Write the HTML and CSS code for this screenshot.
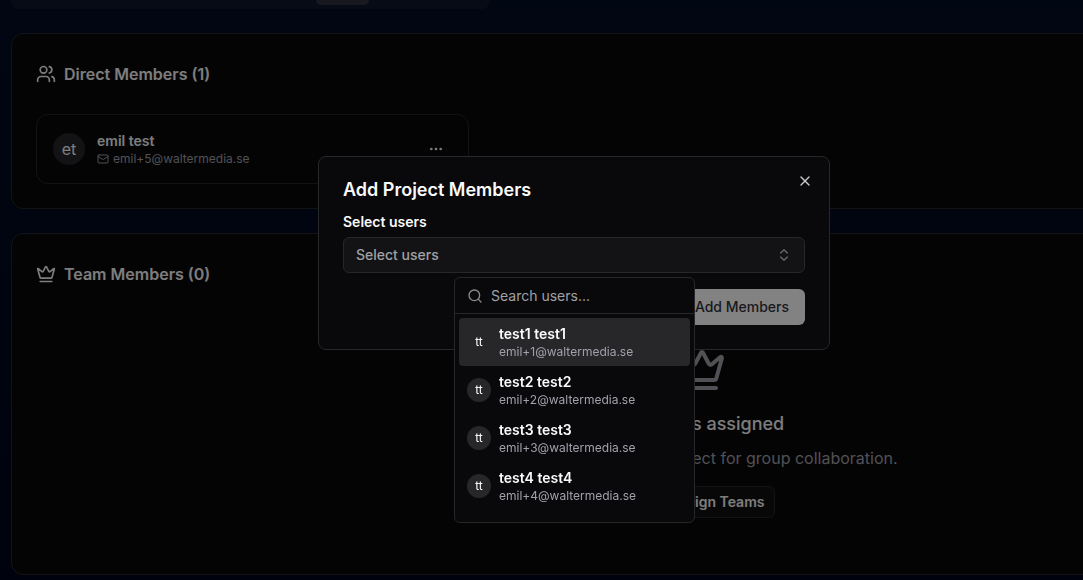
FILE: index.html
```html
<!DOCTYPE html>
<html lang="en">
<head>
  <meta charset="UTF-8" />
  <meta name="viewport" content="width=device-width, initial-scale=1.0" />
  <title>Project Members</title>
  <link rel="stylesheet" href="styles.css">
</head>
<body>
  <main class="page">
    <div class="tabs"><span class="tab-active"></span></div>

    <section class="card">
      <h2 class="card-title">
        <svg class="icon icon-lg" viewBox="0 0 24 24"><path d="M16 21v-2a4 4 0 0 0-4-4H6a4 4 0 0 0-4 4v2"/><circle cx="9" cy="7" r="4"/><path d="M22 21v-2a4 4 0 0 0-3-3.87"/><path d="M16 3.13a4 4 0 0 1 0 7.75"/></svg>
        Direct Members (1)
      </h2>
      <div class="member-grid">
        <div class="member">
          <span class="avatar">et</span>
          <div class="member-info">
            <div class="name">emil test</div>
            <div class="email">
              <svg class="icon icon-xs" viewBox="0 0 24 24"><rect x="2" y="4" width="20" height="16" rx="2"/><path d="m22 7-8.97 5.7a1.94 1.94 0 0 1-2.06 0L2 7"/></svg>
              emil+5@waltermedia.se
            </div>
          </div>
          <button type="button" class="icon-btn" aria-label="Member actions">
            <svg class="icon" viewBox="0 0 24 24"><circle cx="12" cy="12" r="1"/><circle cx="19" cy="12" r="1"/><circle cx="5" cy="12" r="1"/></svg>
          </button>
        </div>
      </div>
    </section>

    <section class="card">
      <h2 class="card-title">
        <svg class="icon icon-lg" viewBox="0 0 24 24"><path d="M11.562 3.266a.5.5 0 0 1 .876 0L15.39 8.87a1 1 0 0 0 1.516.294L21.183 5.5a.5.5 0 0 1 .798.519l-2.834 10.246a1 1 0 0 1-.956.734H5.81a1 1 0 0 1-.957-.734L2.02 6.02a.5.5 0 0 1 .798-.519l4.276 3.664a1 1 0 0 0 1.516-.294z"/><path d="M5 21h14"/></svg>
        Team Members (0)
      </h2>
      <div class="empty">
        <svg class="icon icon-xl" viewBox="0 0 24 24"><path d="M11.562 3.266a.5.5 0 0 1 .876 0L15.39 8.87a1 1 0 0 0 1.516.294L21.183 5.5a.5.5 0 0 1 .798.519l-2.834 10.246a1 1 0 0 1-.956.734H5.81a1 1 0 0 1-.957-.734L2.02 6.02a.5.5 0 0 1 .798-.519l4.276 3.664a1 1 0 0 0 1.516-.294z"/><path d="M5 21h14"/></svg>
        <h3>No teams assigned</h3>
        <p>Assign teams to this project for group collaboration.</p>
        <button type="button" class="btn-outline">
          <svg class="icon" viewBox="0 0 24 24"><path d="M5 12h14"/><path d="M12 5v14"/></svg>
          Assign Teams
        </button>
      </div>
    </section>
  </main>

  <div class="overlay">
    <div class="dialog" role="dialog" aria-labelledby="dialogTitle">
      <button type="button" class="close" aria-label="Close">
        <svg class="icon" viewBox="0 0 24 24"><path d="M18 6 6 18"/><path d="m6 6 12 12"/></svg>
      </button>
      <h2 id="dialogTitle">Add Project Members</h2>
      <label for="userSelect">Select users</label>
      <div class="select-wrap">
        <button type="button" id="userSelect" class="select" aria-expanded="true">
          Select users
          <svg class="icon" viewBox="0 0 24 24"><path d="m7 15 5 5 5-5"/><path d="m7 9 5-5 5 5"/></svg>
        </button>

        <div class="popover">
          <div class="search">
            <svg class="icon" viewBox="0 0 24 24"><circle cx="11" cy="11" r="8"/><path d="m21 21-4.3-4.3"/></svg>
            <input type="text" placeholder="Search users..." aria-label="Search users" />
          </div>
          <ul class="user-list">
            <li class="user selected">
              <span class="avatar avatar-sm">tt</span>
              <div>
                <div class="name">test1 test1</div>
                <div class="email">emil+1@waltermedia.se</div>
              </div>
            </li>
            <li class="user">
              <span class="avatar avatar-sm">tt</span>
              <div>
                <div class="name">test2 test2</div>
                <div class="email">emil+2@waltermedia.se</div>
              </div>
            </li>
            <li class="user">
              <span class="avatar avatar-sm">tt</span>
              <div>
                <div class="name">test3 test3</div>
                <div class="email">emil+3@waltermedia.se</div>
              </div>
            </li>
            <li class="user">
              <span class="avatar avatar-sm">tt</span>
              <div>
                <div class="name">test4 test4</div>
                <div class="email">emil+4@waltermedia.se</div>
              </div>
            </li>
          </ul>
        </div>
      </div>
      <div class="dialog-footer">
        <button type="button" class="btn-primary">Add Members</button>
      </div>
    </div>
  </div>
</body>
</html>
```

FILE: styles.css
```css
* {
  box-sizing: border-box;
}
body {
  margin: 0;
  min-height: 100vh;
  overflow: hidden;
  font-family: Inter, "Liberation Sans", sans-serif;
  font-size: 14px;
  line-height: 20px;
  color: #fafafa;
  background: linear-gradient(#000c24, #00061c);
}
h2, h3, p, ul {
  margin: 0;
  padding: 0;
}
button, input {
  font: inherit;
  color: inherit;
}
.icon {
  width: 16px;
  height: 16px;
  flex-shrink: 0;
  fill: none;
  stroke: currentColor;
  stroke-width: 2;
  stroke-linecap: round;
  stroke-linejoin: round;
}
.icon-xs {
  width: 12px;
  height: 12px;
}
.icon-lg {
  width: 20px;
  height: 20px;
}
.icon-xl {
  width: 48px;
  height: 48px;
}

/* page behind the dialog, wider than small windows */
.page {
  display: flex;
  flex-direction: column;
  gap: 24px;
  min-width: 1404px;
  padding: 0 11px 5px;
}
.tabs {
  width: 479px;
  padding: 0 4px 4px;
  border-radius: 0 0 8px 8px;
  background: #0c162c;
}
.tab-active {
  display: block;
  width: 53px;
  height: 5px;
  margin-left: 301px;
  border-radius: 0 0 6px 6px;
  background: #30323e;
}
.card {
  padding: 24px;
  border: 1px solid #27272a;
  border-radius: 12px;
  background: #09090b;
}
.card-title {
  display: flex;
  align-items: center;
  gap: 8px;
  margin-bottom: 24px;
  font-size: 16px;
  font-weight: 600;
  line-height: 32px;
}
.member-grid {
  display: grid;
  grid-template-columns: repeat(3, 1fr);
  gap: 16px;
}
.member {
  display: flex;
  align-items: center;
  gap: 12px;
  padding: 16px;
  border: 1px solid #27272a;
  border-radius: 12px;
}
.member-info {
  flex: 1;
}
.avatar {
  display: flex;
  align-items: center;
  justify-content: center;
  width: 32px;
  height: 32px;
  border-radius: 50%;
  font-size: 16px;
  background: #27272a;
}
.avatar-sm {
  width: 24px;
  height: 24px;
  font-size: 12px;
}
.name {
  font-weight: 600;
}
.email {
  display: flex;
  align-items: center;
  gap: 4px;
  font-size: 12px;
  line-height: 16px;
  color: #a1a1aa;
}
.icon-btn {
  display: flex;
  align-items: center;
  justify-content: center;
  width: 32px;
  height: 32px;
  padding: 0;
  border: none;
  background: none;
}
.empty {
  display: flex;
  flex-direction: column;
  align-items: center;
  padding: 32px 0;
}
.empty .icon-xl {
  color: #a1a1aa;
}
.empty h3 {
  margin: 16px 0 8px;
  font-size: 18px;
  font-weight: 500;
  line-height: 28px;
}
.empty p {
  margin-bottom: 16px;
  font-size: 16px;
  line-height: 24px;
  color: #a1a1aa;
}
.btn-outline {
  display: flex;
  align-items: center;
  gap: 14px;
  height: 32px;
  padding: 0 10px;
  border: 1px solid #27272a;
  border-radius: 6px;
  font-weight: 600;
  background: #111113;
}

.overlay {
  position: fixed;
  inset: 0;
  display: flex;
  align-items: flex-start;
  justify-content: center;
  padding: 156px 0 0 65px;
  background: rgba(0, 0, 0, 0.5);
}
.dialog {
  position: relative;
  width: 100%;
  max-width: 512px;
  padding: 24px;
  border: 1px solid #27272a;
  border-radius: 8px;
  background: #09090b;
}
.dialog h2 {
  margin-bottom: 16px;
  font-size: 18px;
  font-weight: 600;
  line-height: 18px;
}
.dialog label {
  display: block;
  margin-bottom: 8px;
  font-weight: 600;
  line-height: 14px;
}
.close {
  position: absolute;
  top: 16px;
  right: 16px;
  padding: 0;
  border: none;
  line-height: 0;
  background: none;
  opacity: 0.8;
}
.select-wrap {
  position: relative;
}
.select {
  display: flex;
  align-items: center;
  justify-content: space-between;
  width: 100%;
  height: 36px;
  padding: 0 12px;
  border: 1px solid #27272a;
  border-radius: 6px;
  font-weight: 500;
  color: #a1a1a6;
  background: #131315;
}
.select .icon {
  opacity: 0.6;
}
.dialog-footer {
  display: flex;
  justify-content: flex-end;
  margin-top: 16px;
}
.btn-primary {
  height: 36px;
  padding: 0 16px;
  border: none;
  border-radius: 6px;
  font-weight: 500;
  color: #18181b;
  background: #828283;
}

.popover {
  position: absolute;
  top: calc(100% + 4px);
  right: 110px;
  width: 241px;
  border: 1px solid #27272a;
  border-radius: 6px;
  background: #09090b;
}
.search {
  display: flex;
  align-items: center;
  gap: 8px;
  height: 36px;
  padding: 0 12px;
  border-bottom: 1px solid #27272a;
  color: #8a8a90;
}
.search input {
  flex: 1;
  min-width: 0;
  padding: 0;
  border: none;
  outline: none;
  background: none;
}
.search input::placeholder {
  color: #a1a1a6;
}
.user-list {
  padding: 4px 4px 12px;
  list-style: none;
}
.user {
  display: flex;
  align-items: center;
  gap: 8px;
  padding: 6px 8px;
  border-radius: 4px;
}
.user.selected {
  background: #27272a;
}
```
